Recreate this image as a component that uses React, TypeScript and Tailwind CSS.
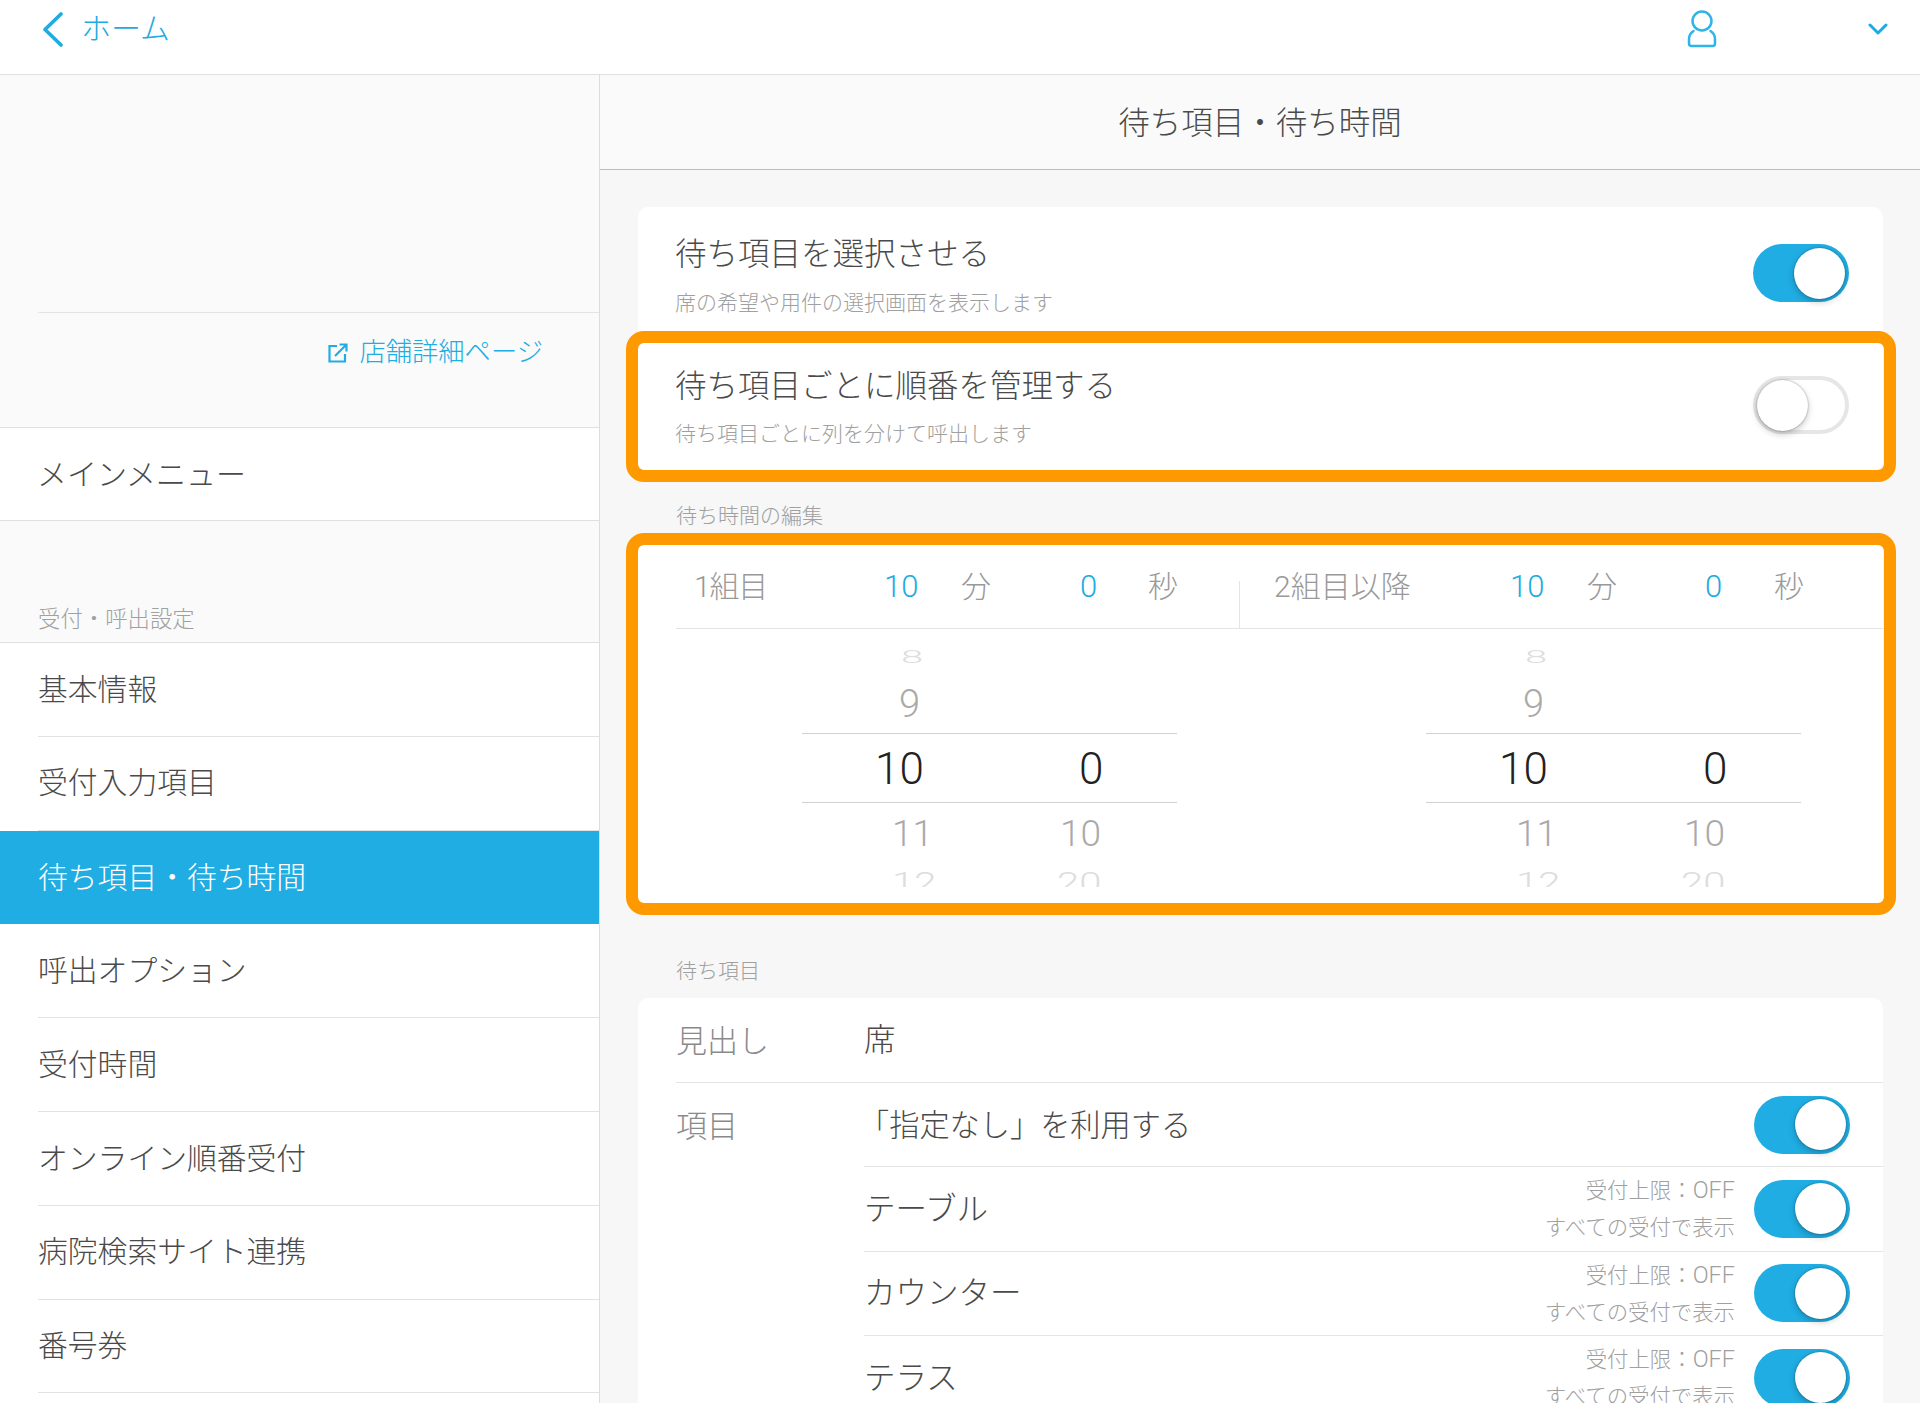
const menuItems = [
    { label: "基本情報" },
    { label: "受付入力項目" },
    { label: "待ち項目・待ち時間", active: true },
    { label: "呼出オプション" },
    { label: "受付時間" },
    { label: "オンライン順番受付" },
    { label: "病院検索サイト連携" },
    { label: "番号券" },
    { label: "" },
]

const waitItems = [
    { label: "「指定なし」を利用する", limit: false },
    { label: "テーブル", limit: true },
    { label: "カウンター", limit: true },
    { label: "テラス", limit: true },
]

function Toggle({ on }: { on: boolean }) {
    if (on) {
        return (
            <div className="w-[96px] h-[58px] shrink-0 rounded-full bg-[#20ade3] flex items-center justify-end pr-[4px]">
                <div className="w-[51px] h-[51px] rounded-full bg-white shadow-[0_0_2px_rgba(0,0,0,0.4),0_3px_7px_rgba(0,0,0,0.22)]" />
            </div>
        )
    }

    return (
        <div className="w-[96px] h-[58px] shrink-0 rounded-full bg-white border-[4px] border-[#e6e6e6] flex items-center">
            <div className="w-[51px] h-[51px] shrink-0 rounded-full bg-white shadow-[0_0_2px_rgba(0,0,0,0.4),0_3px_7px_rgba(0,0,0,0.22)]" />
        </div>
    )
}

function Highlight({ className }: { className: string }) {
    return <div className={`absolute border-[12px] border-[#ff9900] rounded-[18px] pointer-events-none ${className}`} />
}

function Wheel() {
    return (
        <div className="w-[375px] font-light">
            <div className="h-[12px]" />
            <div className="flex h-[34px] items-center text-[#dddddd]">
                <div className="w-[187px] pl-[99px] text-[40px] leading-none scale-y-[0.45] origin-left">8</div>
            </div>
            <div className="flex h-[59px] items-center pt-[1px] text-[#aaaaaa] text-[38px] leading-none">
                <div className="w-[187px] pl-[97px]">9</div>
            </div>
            <div className="flex h-[70px] items-center pt-[2px] border-y border-[#d2d2d2] text-[#222222] text-[44px] leading-none">
                <div className="w-[187px] pl-[73px]">10</div>
                <div className="w-[187px] pl-[90px]">0</div>
            </div>
            <div className="flex h-[59px] items-center pt-[1px] text-[#aaaaaa] text-[37px] leading-none">
                <div className="w-[187px] pl-[90px]">11</div>
                <div className="w-[187px] pl-[71px]">10</div>
            </div>
            <div className="flex h-[25px] overflow-hidden text-[#dddddd] text-[40px] leading-none pt-[7px]">
                <div className="w-[187px] pl-[90px] scale-y-[0.7] origin-top">12</div>
                <div className="w-[187px] pl-[68px] scale-y-[0.7] origin-top">20</div>
            </div>
        </div>
    )
}

function Sidebar() {
    return (
        <div className="w-[600px] shrink-0 border-r border-[#dddddd] text-[#4a4a4a]">
            <div className="h-[238px] bg-[#fafafa] pl-[38px]">
                <div className="h-full border-b border-[#e4e4e4]" />
            </div>
            <div className="h-[115px] bg-[#fafafa] border-b border-[#e0e0e0] flex items-center justify-end pr-[56px] pb-[35px] text-[#20ade3]">
                <svg width="20" height="20" viewBox="0 0 20 20" fill="none" stroke="currentColor" strokeWidth="2.2" className="mr-[11px]">
                    <path d="M9 3H1.5V18.5H17V11" />
                    <path d="M7 13L18 2M11.5 1.5H18.5V8.5" />
                </svg>
                <span className="text-[26.3px] leading-none font-light">店舗詳細ページ</span>
            </div>
            <div className="h-[93px] bg-white border-b border-[#e0e0e0] flex items-center pl-[37px] text-[30px] font-light">メインメニュー</div>
            <div className="h-[122px] bg-[#fafafa] border-b border-[#e0e0e0] pl-[38px] pt-[83px] text-[22.4px] leading-[30px] text-[#a0a0a0] font-light">受付・呼出設定</div>
            {
                menuItems.map(({ label, active }) => (
                    <div key={`menu:${label}`} className={active ? "h-[93.8px] pl-[38px] bg-[#20ade3] text-white" : "h-[93.8px] pl-[38px] bg-white"}>
                        <div className={active ? "h-full flex items-center pt-[1px] text-[29.8px] font-light" : "h-full flex items-center pt-[1px] text-[29.8px] font-light border-b border-[#e2e2e2]"}>
                            {label}
                        </div>
                    </div>
                ))
            }
        </div>
    )
}

function TimeHeader() {
    return (
        <div className="h-[84px] ml-[38px] border-b border-[#e4e4e4] flex items-center text-[#999999] text-[30px] leading-none font-light">
            <span className="w-[208px] pl-[18px] tracking-[-1.2px]">1組目</span>
            <span className="w-[77px] text-[31px] text-[#1dabe3]">10</span>
            <span className="w-[119px]">分</span>
            <span className="w-[68px] text-[31px] text-[#1dabe3]">0</span>
            <span className="w-[91px]">秒</span>
            <div className="self-end h-[47px] w-[1px] bg-[#e4e4e4]" />
            <span className="w-[270px] pl-[34px]">2組目以降</span>
            <span className="w-[77px] text-[31px] text-[#1dabe3]">10</span>
            <span className="w-[118px]">分</span>
            <span className="w-[69px] text-[31px] text-[#1dabe3]">0</span>
            <span>秒</span>
        </div>
    )
}

export default function App() {
    return (
        <div className="w-[1920px] h-[1403px] overflow-hidden bg-white font-['Roboto','Noto_Sans_CJK_JP',sans-serif]">
            <div className="h-[75px] border-b border-[#e0e0e0] flex items-center justify-between pl-[42px] pr-[32px] pb-[16px] text-[#1dabe3]">
                <div className="flex items-center">
                    <svg width="21" height="35" viewBox="0 0 21 35" fill="none" stroke="currentColor" strokeWidth="3.6" strokeLinecap="round" strokeLinejoin="round">
                        <path d="M19 2L3 17.5L19 33" />
                    </svg>
                    <span className="ml-[18px] text-[30px] leading-none font-light">ホーム</span>
                </div>
                <div className="flex items-center">
                    <svg width="30" height="38" viewBox="0 0 30 38" fill="none" stroke="#2fb4e8" strokeWidth="2.5" strokeLinecap="round">
                        <circle cx="15" cy="11" r="9.5" />
                        <path d="M6.5 21C3.5 23 2 25.5 2 29V33.5C2 35 3 36 4.5 36H25.5C27 36 28 35 28 33.5V29C28 25.5 26.5 23 23.5 21" />
                    </svg>
                    <svg width="20" height="12" viewBox="0 0 20 12" fill="none" stroke="currentColor" strokeWidth="3" strokeLinecap="round" strokeLinejoin="round" className="ml-[151px]">
                        <path d="M2 2L10 10L18 2" />
                    </svg>
                </div>
            </div>
            <div className="flex h-[1328px]">
                <Sidebar />
                <div className="flex-1 bg-[#f7f7f7]">
                    <div className="h-[95px] bg-[#fafafa] border-b border-[#bcbcbc] flex items-center justify-center pt-[3px] text-[31.5px] leading-none text-[#4a4a4a] font-light">
                        待ち項目・待ち時間
                    </div>
                    <div className="ml-[38px] mr-[37px] pt-[37px]">
                        <div className="bg-white rounded-[10px]">
                            <div className="h-[132px] flex items-center justify-between pl-[37px] pr-[34px]">
                                <div className="self-start pt-[28px]">
                                    <div className="text-[31.5px] leading-[40px] text-[#4a4a4a] font-light">待ち項目を選択させる</div>
                                    <div className="mt-[8px] text-[21px] leading-[40px] text-[#a0a0a0] font-light">席の希望や用件の選択画面を表示します</div>
                                </div>
                                <Toggle on />
                            </div>
                            <div className="relative h-[132px] flex items-center justify-between pl-[37px] pr-[34px]">
                                <div className="self-start pt-[28px]">
                                    <div className="text-[31.5px] leading-[40px] text-[#4a4a4a] font-light">待ち項目ごとに順番を管理する</div>
                                    <div className="mt-[7px] text-[21px] leading-[40px] text-[#a0a0a0] font-light">待ち項目ごとに列を分けて呼出します</div>
                                </div>
                                <Toggle on={false} />
                                <Highlight className="-left-[12px] -right-[13px] -top-[8px] -bottom-[11px]" />
                            </div>
                        </div>
                        <div className="h-[74px] pl-[38px] pt-[30px] text-[21px] leading-[30px] text-[#a0a0a0] font-light">待ち時間の編集</div>
                        <div className="relative h-[358px] bg-white">
                            <TimeHeader />
                            <div className="flex pl-[164px] -mt-[1px]">
                                <Wheel />
                                <div className="w-[249px]" />
                                <Wheel />
                            </div>
                            <Highlight className="-left-[12px] -right-[13px] -top-[12px] -bottom-[12px]" />
                        </div>
                        <div className="h-[95px] pl-[38px] pt-[53px] text-[21px] leading-[30px] text-[#a0a0a0] font-light">待ち項目</div>
                        <div className="bg-white rounded-t-[10px] pl-[38px] text-[31.5px] leading-none text-[#4a4a4a] font-light">
                            <div className="h-[85px] flex items-center border-b border-[#e4e4e4] pt-[2px]">
                                <span className="w-[188px] text-[31px] text-[#8a8a8a]">見出し</span>
                                <span>席</span>
                            </div>
                            <div className="flex">
                                <span className="w-[188px] pt-[28px] text-[31px] text-[#8a8a8a]">項目</span>
                                <div className="flex-1">
                                    {
                                        waitItems.map(({ label, limit }) => (
                                            <div key={`item:${label}`} className="h-[84.3px] flex items-center border-b border-[#e4e4e4] pr-[33px]">
                                                <span className={limit ? "flex-1 pt-[2px]" : "flex-1 pt-[2px] text-[30.2px] -ml-[5px]"}>{label}</span>
                                                {
                                                    limit && (
                                                        <div className="mr-[19px] pt-[1px] text-right text-[21.4px] leading-[37px] text-[#a0a0a0]">
                                                            <div>受付上限：<span className="text-[23.5px]">OFF</span></div>
                                                            <div>すべての受付で表示</div>
                                                        </div>
                                                    )
                                                }
                                                <Toggle on />
                                            </div>
                                        ))
                                    }
                                </div>
                            </div>
                        </div>
                    </div>
                </div>
            </div>
        </div>
    )
}
